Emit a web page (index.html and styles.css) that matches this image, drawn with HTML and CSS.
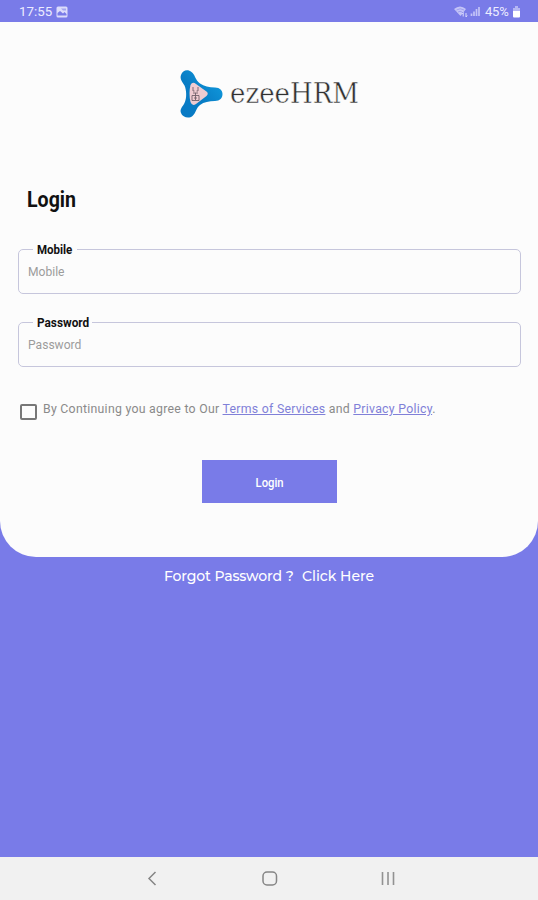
FILE: index.html
```html
<!DOCTYPE html>
<html lang="en">
<head>
<meta charset="utf-8">
<title>ezeeHRM Login</title>
<link rel="stylesheet" href="styles.css">
</head>
<body>
<div class="screen">
  <header class="status">
    <span class="time">17:55</span>
    <svg class="photo" width="12" height="12" viewBox="0 0 12 12"><rect x=".5" y=".5" width="11" height="11" rx="1.5" fill="#dcdcfb"/><path d="M1.500 9.500V7l2.500-2 3 2.500L8.500 6l2 2v1.500z" fill="#797be8"/><path d="M5 2.500h5v2H7z" fill="#a3a4f0"/></svg>
    <svg class="signals" width="28" height="13" viewBox="0 0 28 13"><path d="M0 4Q6-1 12 4L6.500 11z" fill="#c4c4f7"/><path d="M2.500 5Q6 2.500 10 5M4 7q2-1.500 4 0" fill="none" stroke="#797be8" stroke-width=".5"/><path d="M8 7h5v5H8z" fill="#797be8"/><path d="M9.200 7.500v4M8 9l1.200-1.500M12 12V8m1.200 2.500L12 12" fill="none" stroke="#dcdcfb"/><path d="M17.500 11V8.500M20 11V6.500M22.500 11V4M25 11V2" stroke="#c4c4f7" stroke-width="1.700"/></svg>
    <span class="percent">45%</span>
    <svg width="9" height="12" viewBox="0 0 9 12"><path d="M3 0h3v2h2v3H1V2h2z" fill="#b5b6f4"/><path d="M1 5h7v5.500a1 1 0 0 1-1 1H2a1 1 0 0 1-1-1z" fill="#fff"/></svg>
  </header>
  <main class="card">
    <svg class="logo" width="200" height="52" viewBox="0 0 200 52" role="img" aria-label="ezeeHRM">
      <defs><linearGradient id="blue" x1="0" y1="1" x2="1" y2="0"><stop stop-color="#0879c4"/><stop offset=".45" stop-color="#087dc5"/><stop offset="1" stop-color="#13a2e4"/></linearGradient></defs>
      <path d="M13.500 5C17 7 17 13 22 16.500C26 19 31 20.500 37 20.500C42 20.500 44.500 23.500 44.500 27C44.500 31 42 34 37 34C31 34 26 35 22 38C18 41 18 46 14.500 49C11 52 4.500 50.500 3 46C1.500 42 4.500 40 6.500 36C9 31 8.500 23 6.500 18.500C4.500 15 1.500 12 3 8C4.500 3 10 2 13.500 5z" fill="url(#blue)"/>
      <path d="M13.500 16.500Q15.500 15 18 17L28.500 24.500Q31 26.500 28.500 29L18 37Q14 39.500 12.500 35Q10.500 26 12.500 18z" fill="#efcbd1"/>
      <path d="M15 20v4h1.500M20 20v4h-1.500M15 26h5M17.500 26v7M14 28.500h7M14 33.500h7M14 28.500v5M21 28.500v5M16 31h3" fill="none" stroke="#72616a" stroke-width=".9"/>
      <text class="brand" x="52" y="36" textLength="129" lengthAdjust="spacingAndGlyphs">ezeeHRM</text>
    </svg>
    <h1><span class="narrow">Login</span></h1>
    <form>
      <fieldset><legend><span class="narrow">Mobile</span></legend><span class="narrow hint">Mobile</span></fieldset>
      <fieldset class="password"><legend><span class="narrow">Password</span></legend><span class="narrow hint">Password</span></fieldset>
      <div class="agree"><span class="box"></span><p>By Continuing you agree to Our <a>Terms of Services</a> and <a>Privacy Policy</a>.</p></div>
      <button type="button"><span class="narrow">Login</span></button>
    </form>
  </main>
  <p class="forgot"><b>Forgot Password ?</b><span>Click Here</span></p>
  <nav>
    <svg width="270" height="20" viewBox="0 0 270 20" fill="none"><path d="M21.500 4L15 10.500l6.500 6.500" stroke="#858585" stroke-width="1.500"/><rect x="129" y="4" width="13.500" height="13" rx="4" stroke="#858585" stroke-width="1.500"/><path d="M248.500 4v13M254 4v13M259.500 4v13" stroke="#929292" stroke-width="1.600"/></svg>
  </nav>
</div>
</body>
</html>
```
FILE: styles.css
```css
* { box-sizing: border-box; }
body { margin: 0; font-family: Roboto, sans-serif; }
h1, p { margin: 0; font-weight: 400; }
.screen { width: 538px; height: 900px; background: #797be8; display: flex; flex-direction: column; overflow: hidden; }
.status { height: 22px; flex: none; display: flex; align-items: center; padding: 1px 17px 0 19px; color: #ececff; font-size: 13px; }
.time { width: 37px; font-size: 13.3px; }
.signals { margin-left: auto; }
.percent { margin: 0 1px 0 3px; width: 26px; font-size: 13px; letter-spacing: -.2px; }
.card { height: 535px; flex: none; background: #fcfcfc; border-radius: 0 0 36px 36px; padding: 45px 18px 0; display: flex; flex-direction: column; }
.logo { margin-left: 160px; flex: none; overflow: visible; }
.brand { font: 27.5px "DejaVu Serif", serif; fill: #303030; stroke: #fcfcfc; stroke-width: .45px; }
.narrow { display: inline-block; transform: scaleX(.92); transform-origin: left; white-space: nowrap; }
h1 { margin: 68px 0 0 9px; height: 26px; line-height: 26px; font-size: 21.5px; font-weight: 700; color: #111; }
h1 .narrow { transform: scaleX(.91); }
form { margin-top: 29px; display: flex; flex-direction: column; }
fieldset { margin: 0; height: 52px; padding: 0 9px; min-width: 0; border: 1px solid #c6c6dc; border-radius: 5px; margin-right: -1px; }
.password { margin-top: 21px; }
legend { height: 14px; width: 44px; margin-left: 5px; padding: 1px 3px 0 4px; font-size: 12.5px; line-height: 14px; font-weight: 700; color: #111; }
.password legend { width: 59px; }
.password legend .narrow { transform: scaleX(.945); }
.hint { display: block; margin-top: 7px; font-size: 13px; line-height: 17px; color: #9c9c9c; }
fieldset .hint { transform: scaleX(.93); }
.agree { display: flex; height: 20px; margin-top: 34px; padding-left: 2px; }
.box { width: 17px; height: 16px; margin-top: 3px; border: 2px solid #777; border-radius: 2px; }
.agree p { margin-left: 6px; font-size: 12.3px; line-height: 16px; letter-spacing: .27px; color: #8a8a8a; white-space: nowrap; }
.agree a { color: #8080d8; text-decoration: underline; }
button { width: 135px; height: 43px; margin: 39px auto 0; padding: 1px 0 0; border: 0; background: #797be8; color: #fff; font: 500 12.5px Roboto, sans-serif; }
button .narrow { transform-origin: center; transform: translateX(1px) scaleX(.9); }
.forgot { height: 300px; padding: 9px 0 0 164px; font: 500 14px/20px Montserrat, "Open Sans", sans-serif; color: #fff; white-space: nowrap; }
.forgot b { display: inline-block; width: 138px; font-weight: 500; letter-spacing: -.12px; }
nav { height: 43px; flex: none; padding: 11px 0 0 134px; background: #f1f1f1; }
nav svg { display: block; }
```
